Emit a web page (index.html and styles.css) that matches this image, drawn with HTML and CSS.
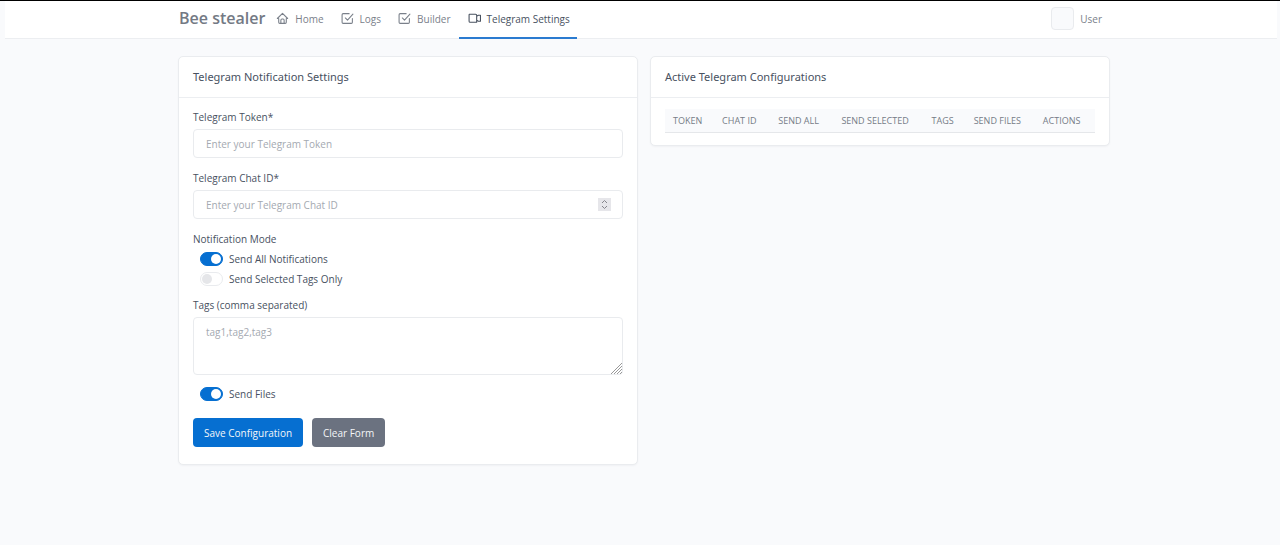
FILE: index.html
```html
<!DOCTYPE html>
<html lang="en">
<head>
<meta charset="utf-8">
<meta name="viewport" content="width=device-width, initial-scale=1">
<title>Telegram Settings</title>
<link rel="stylesheet" href="styles.css">
</head>
<body>
<header class="topbar">
  <div class="container topbar-inner">
    <span class="brand">Bee stealer</span>
    <nav class="nav">
      <a class="nav-link" href="#">
        <svg class="icon" viewBox="0 0 24 24"><path d="M5 12H2.500L12 2.500l9.500 9.500H19M5 12v7a2 2 0 0 0 2 2h10a2 2 0 0 0 2-2v-7M9 21v-6a2 2 0 0 1 2-2h2a2 2 0 0 1 2 2v6"/></svg>
        Home</a>
      <a class="nav-link" href="#">
        <svg class="icon" viewBox="0 0 24 24"><path d="M8 11l4 4L22 4M21 12v7a2 2 0 0 1-2 2H4a2 2 0 0 1-2-2V5a2 2 0 0 1 2-2h11"/></svg>
        Logs</a>
      <a class="nav-link" href="#">
        <svg class="icon" viewBox="0 0 24 24"><path d="M8 11l4 4L22 4M21 12v7a2 2 0 0 1-2 2H4a2 2 0 0 1-2-2V5a2 2 0 0 1 2-2h11"/></svg>
        Builder</a>
      <a class="nav-link active" href="#" aria-current="page">
        <svg class="icon" viewBox="0 0 24 24"><path d="M3 4h11a2 2 0 0 1 2 2v13H4a2 2 0 0 1-2-2V5zM16 8l3-2h4v11h-4l-3-2"/></svg>
        Telegram Settings</a>
    </nav>
    <a class="user" href="#"><span class="avatar"></span>User</a>
  </div>
</header>
<main class="container columns">
  <section class="card">
    <h2 class="card-title">Telegram Notification Settings</h2>
    <form class="card-body form">
      <div class="field">
        <label class="label" for="token">Telegram Token*</label>
        <input class="control" id="token" type="text" placeholder="Enter your Telegram Token">
      </div>
      <div class="field">
        <label class="label" for="chat">Telegram Chat ID*</label>
        <div class="number">
          <input class="control" id="chat" type="text" inputmode="numeric" placeholder="Enter your Telegram Chat ID">
          <button class="stepper" type="button" aria-label="Change value"><svg viewBox="0 0 13 13"><path d="M4 5l2.500-2.500L9 5M4 8l2.500 2.500L9 8"/></svg></button>
        </div>
      </div>
      <fieldset class="field modes">
        <legend class="label">Notification Mode</legend>
        <label class="switch"><input type="checkbox" checked>Send All Notifications</label>
        <label class="switch"><input type="checkbox">Send Selected Tags Only</label>
      </fieldset>
      <div class="field tags">
        <label class="label" for="tags">Tags (comma separated)</label>
        <div class="area-wrap">
          <textarea class="control area" id="tags" placeholder="tag1,tag2,tag3"></textarea>
          <svg class="grip" viewBox="0 0 11 11" aria-hidden="true"><path d="M0 11L11 0M3 11l8-8M6 11l5-5M9 11l2-2"/></svg>
        </div>
      </div>
      <label class="switch files"><input type="checkbox" checked>Send Files</label>
      <div class="actions">
        <button class="btn primary" type="button">Save Configuration</button>
        <button class="btn" type="button">Clear Form</button>
      </div>
    </form>
  </section>
  <section class="card">
    <h2 class="card-title">Active Telegram Configurations</h2>
    <div class="card-body">
      <table class="table">
        <colgroup><col class="c-token"><col class="c-chat"><col class="c-all"><col class="c-selected"><col class="c-tags"><col class="c-files"><col class="c-actions"></colgroup>
        <thead><tr><th>Token</th><th>Chat ID</th><th>Send All</th><th>Send Selected</th><th>Tags</th><th>Send Files</th><th>Actions</th></tr></thead>
      </table>
    </div>
  </section>
</main>
</body>
</html>
```
FILE: styles.css
```css
* { box-sizing: border-box; }
body {
  margin: 0;
  min-height: 100vh;
  border-top: 1px solid #000;
  background: #f9fafc;
  color: #48515f;
  font: 10px/16px "Open Sans", "Noto Sans", sans-serif;
}
.container { width: 100%; max-width: 940px; margin: 0 auto; padding-left: 8px; }
.topbar {
  margin: 0 3px 0 5px;
  background: #fff;
  border-bottom: 1px solid #eceef1;
}
.topbar-inner { display: flex; align-items: center; height: 37px; }
.brand { padding-bottom: 4px; color: #737984; font-family: "Open Sans", sans-serif; font-size: 16px; font-weight: 600; line-height: 20px; }
.nav { display: flex; align-self: stretch; margin-left: 2px; }
.nav-link {
  display: flex;
  align-items: center;
  gap: 6px;
  padding: 0 8px 2px 9px;
  color: #7a808a;
  text-decoration: none;
}
.nav-link.active { margin-bottom: -1px; padding: 0 7px 1px 9px; border-bottom: 2px solid #2b7bd0; color: #48515f; }
.icon { width: 13px; height: 13px; fill: none; stroke: currentColor; stroke-width: 2; stroke-linejoin: round; stroke-linecap: round; }
.user { display: flex; align-items: center; gap: 6px; margin-left: auto; padding: 0 9px 2px 0; color: #7a808a; text-decoration: none; }
.avatar { width: 23px; height: 23px; border: 1px solid #e9ebee; border-radius: 4px; background: #f9fafc; }
.columns {
  display: grid;
  grid-template-columns: 1fr 1fr;
  gap: 12px;
  align-items: start;
  padding-top: 17px;
}
.card { background: #fff; border: 1px solid #eaecef; border-radius: 5px; box-shadow: 0 1px 2px #1820300a; }
.card-title { margin: 0; padding: 12px 14px; border-bottom: 1px solid #eceef1; font: 400 11px/16px "Noto Sans", sans-serif; }
.card-body { padding: 11px 14px 12px; }
.form { padding-bottom: 17px; }
.field { margin: 0 0 12px; padding: 0; border: 0; }
.label { display: block; margin: 0 0 4px; padding: 0; }
.control {
  display: block;
  width: 100%;
  height: 29px;
  padding: 6px 12px;
  border: 1px solid #e9ebee;
  border-radius: 4px;
  background: #fff;
  color: #48515f;
  font: inherit;
}
.control::placeholder { color: #a4a9b1; opacity: 1; }
.area { height: 58px; resize: none; }
.area-wrap { position: relative; }
.grip { position: absolute; right: 1px; bottom: 1px; width: 11px; height: 11px; fill: none; stroke: #999; pointer-events: none; }
.number { position: relative; }
.stepper { position: absolute; right: 12px; top: 8px; width: 13px; height: 13px; padding: 0; border: 0; background: #e6e6ea; }
.stepper svg { display: block; fill: none; stroke: #85858c; }
.modes { margin-bottom: 8px; }
.modes .label { margin: 0 0 2px; }
.switch { display: flex; align-items: center; gap: 6px; height: 20px; padding-left: 7px; }
.switch input {
  appearance: none;
  display: flex;
  align-items: center;
  width: 23px;
  height: 14px;
  margin: 0;
  padding: 1px;
  border: 1px solid #e9ebee;
  border-radius: 7px;
  background: #fff;
}
.switch input::before { content: ""; width: 10px; height: 10px; border-radius: 50%; background: #e5e6e9; }
.switch input:checked { justify-content: flex-end; border-color: #066fd1; background: #066fd1; }
.switch input:checked::before { background: #fff; }
.tags { margin-bottom: 9px; }
.files { margin-bottom: 14px; }
.actions { display: flex; gap: 9px; }
.btn { height: 29px; padding: 0 11px; border: 0; border-radius: 4px; background: #6b7280; color: #f4f6f8; font: inherit; }
.primary { background: #066fd1; }
.table { width: 100%; table-layout: fixed; border-collapse: collapse; }
.table th {
  padding: 4px 0 3px 8px;
  border-bottom: 1px solid #e5e7ea;
  background: #f9fafc;
  color: #767c87;
  font-size: 9px;
  font-weight: 400;
  line-height: 16px;
  text-align: left;
  text-transform: uppercase;
  white-space: nowrap;
}
.c-token { width: 49px; }
.c-chat { width: 56px; }
.c-all { width: 63px; }
.c-selected { width: 90px; }
.c-tags { width: 42px; }
.c-files { width: 69px; }
.c-actions { width: 60px; }
```
